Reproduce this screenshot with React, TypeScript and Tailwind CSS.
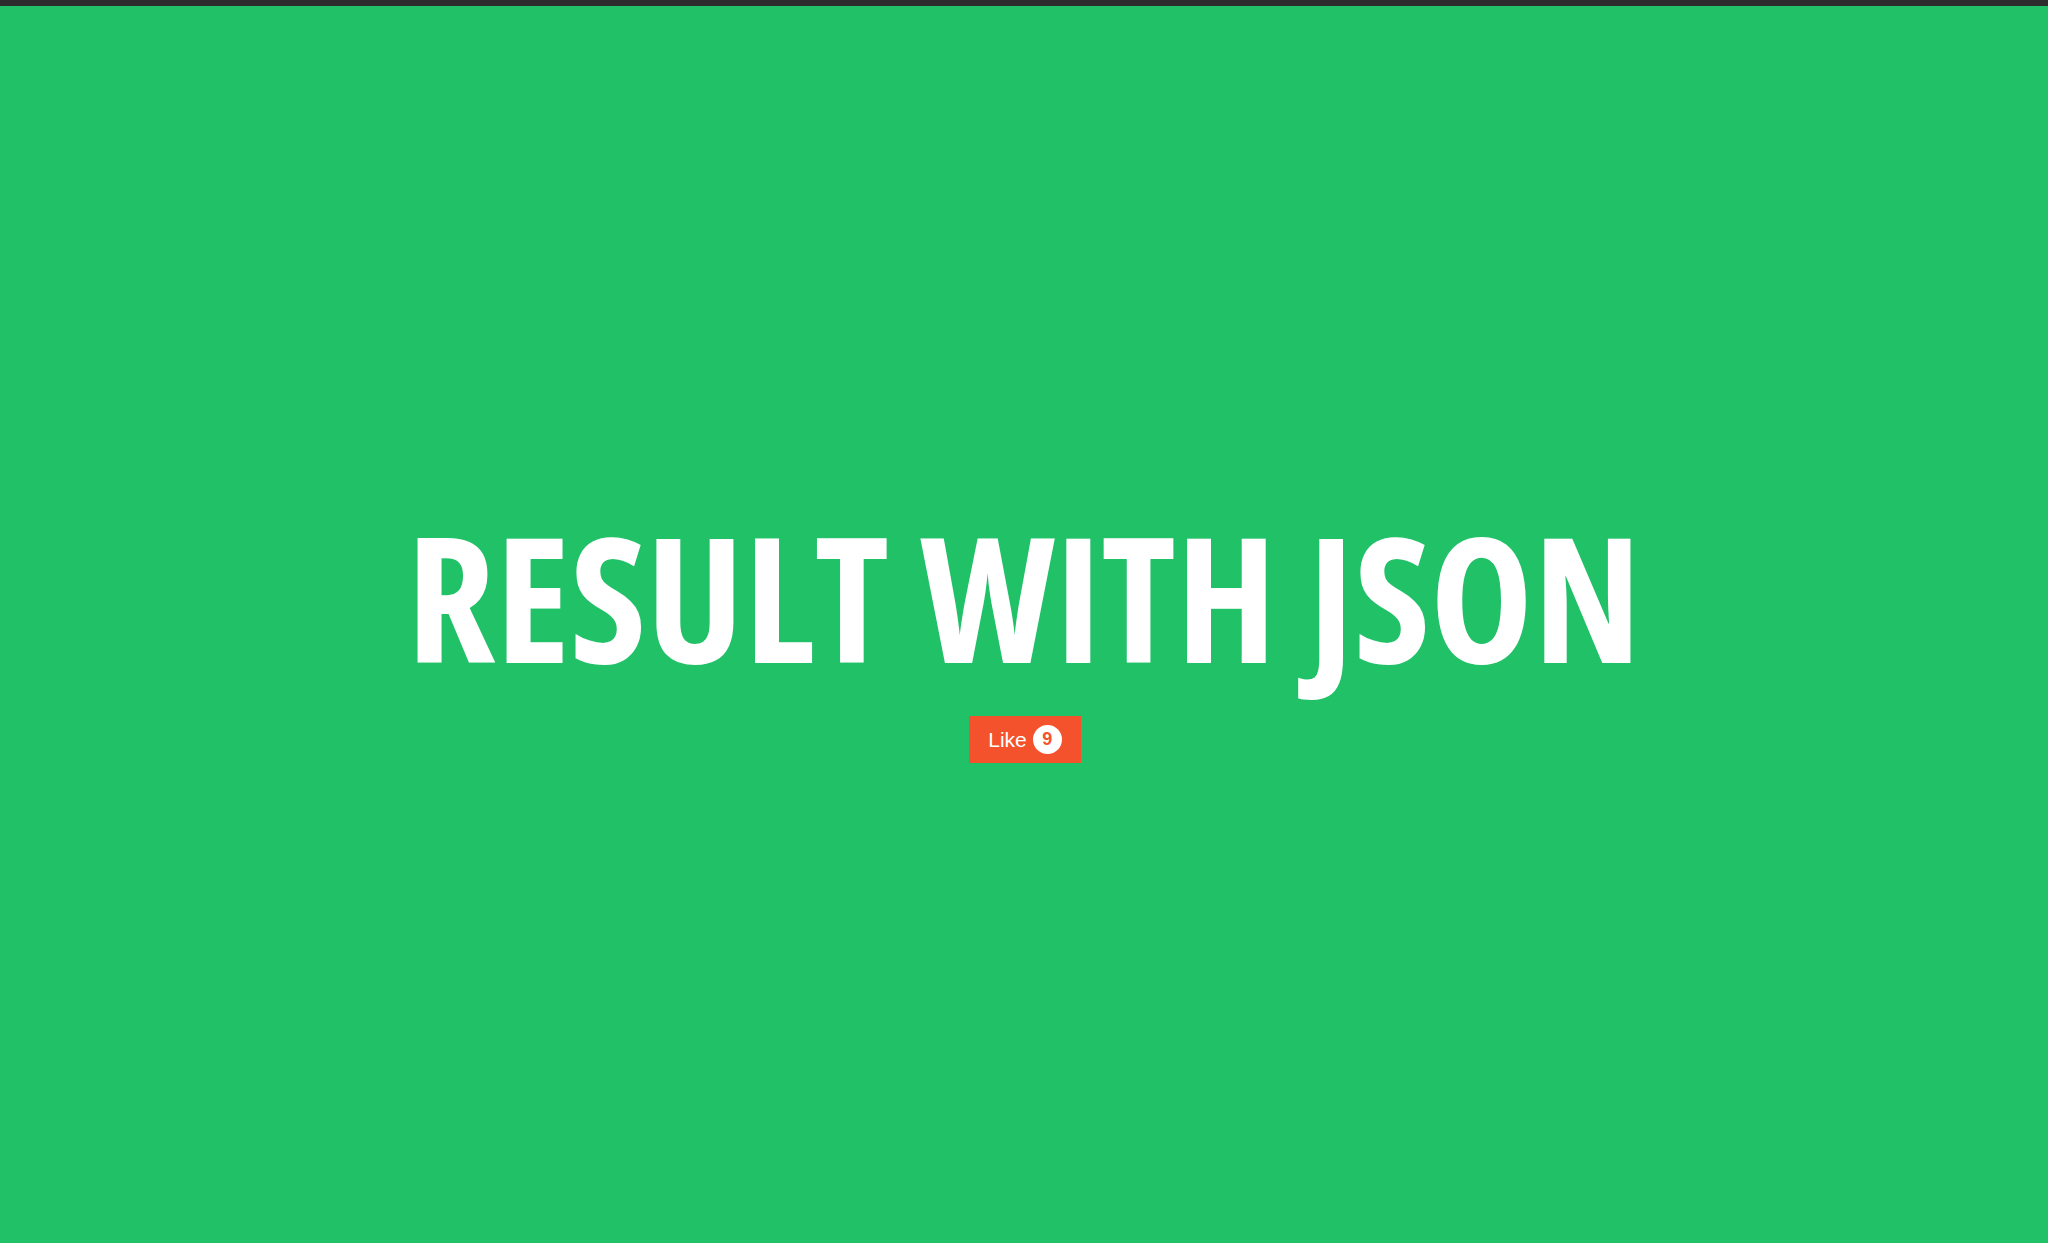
export default function App() {
  return (
    <div className="min-h-screen w-full bg-[#21c168] flex flex-col">
      {/* cut-off header strip */}
      <div className="h-[6px] w-full bg-[#2d2d2d]" />

      <main className="flex flex-col items-center pt-[503px] pb-[480px]">
        <h1 className="font-['Open_Sans',sans-serif] font-bold font-stretch-condensed text-white text-[174px] leading-none uppercase tracking-normal">
          Result with JSON
        </h1>

        <button className="mt-[33px] ml-[2px] h-[47px] flex items-center gap-[6px] px-[19px] bg-[#f4522d] text-white font-['Liberation_Sans',Arial,sans-serif] text-[21px]">
          <span>Like</span>
          <span className="w-[29px] h-[29px] rounded-full bg-white text-[#f4522d] font-bold text-[18px] flex items-center justify-center">
            9
          </span>
        </button>
      </main>
    </div>
  );
}
